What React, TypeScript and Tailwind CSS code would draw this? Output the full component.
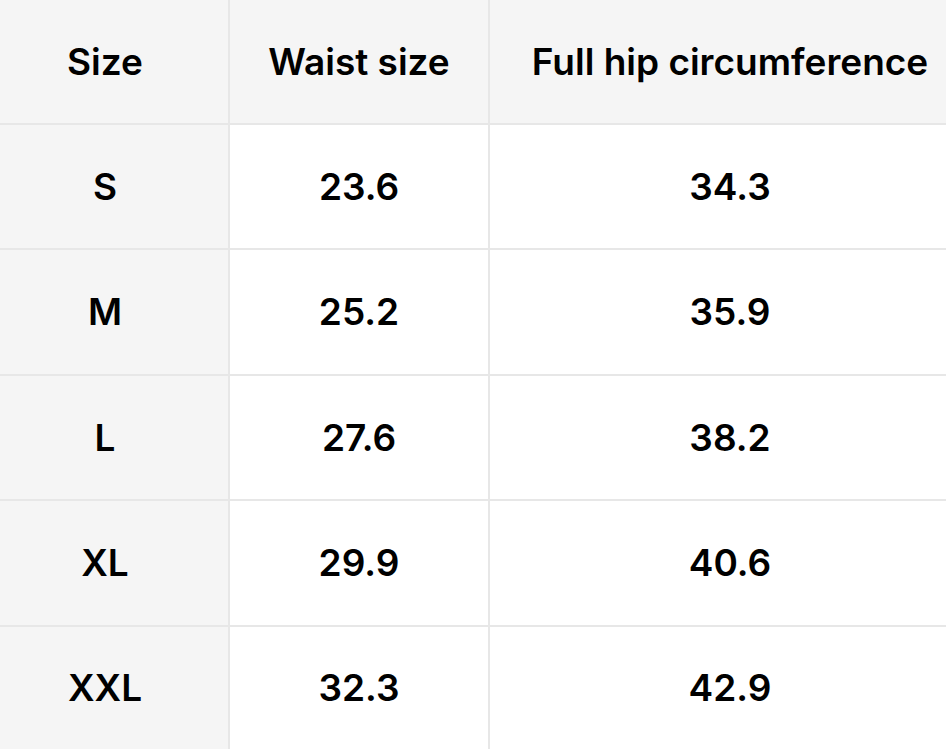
import React from "react";

const rows = [
  { size: "S", waist: "23.6", hip: "34.3" },
  { size: "M", waist: "25.2", hip: "35.9" },
  { size: "L", waist: "27.6", hip: "38.2" },
  { size: "XL", waist: "29.9", hip: "40.6" },
  { size: "XXL", waist: "32.3", hip: "42.9" },
];

const cell = "flex items-center justify-center border-[#e7e7e7]";

export default function App() {
  return (
    <div
      className="w-[946px] h-[749px] overflow-hidden bg-white text-black font-semibold text-[37px]"
      style={{ fontFamily: "Inter, 'Liberation Sans', sans-serif" }}
    >
      <div className="grid grid-cols-[230px_260px_1fr] grid-rows-[125px_125px_126px_125px_126px_122px] h-full">
        <div className={`${cell} bg-[#f5f5f5] border-r-2 border-b-2 pr-[18px]`}>Size</div>
        <div className={`${cell} bg-[#f5f5f5] border-r-2 border-b-2`}>Waist size</div>
        <div className={`${cell} bg-[#f5f5f5] border-b-2 pl-[24px] whitespace-nowrap`}>Full hip circumference</div>
        {rows.map((r, i) => {
          const b = i < rows.length - 1 ? "border-b-2" : "";
          return (
            <React.Fragment key={r.size}>
              <div className={`${cell} bg-[#f5f5f5] border-r-2 pr-[18px] ${b}`}>{r.size}</div>
              <div className={`${cell} border-r-2 ${b}`}>{r.waist}</div>
              <div className={`${cell} pl-[24px] ${b}`}>{r.hip}</div>
            </React.Fragment>
          );
        })}
      </div>
    </div>
  );
}
